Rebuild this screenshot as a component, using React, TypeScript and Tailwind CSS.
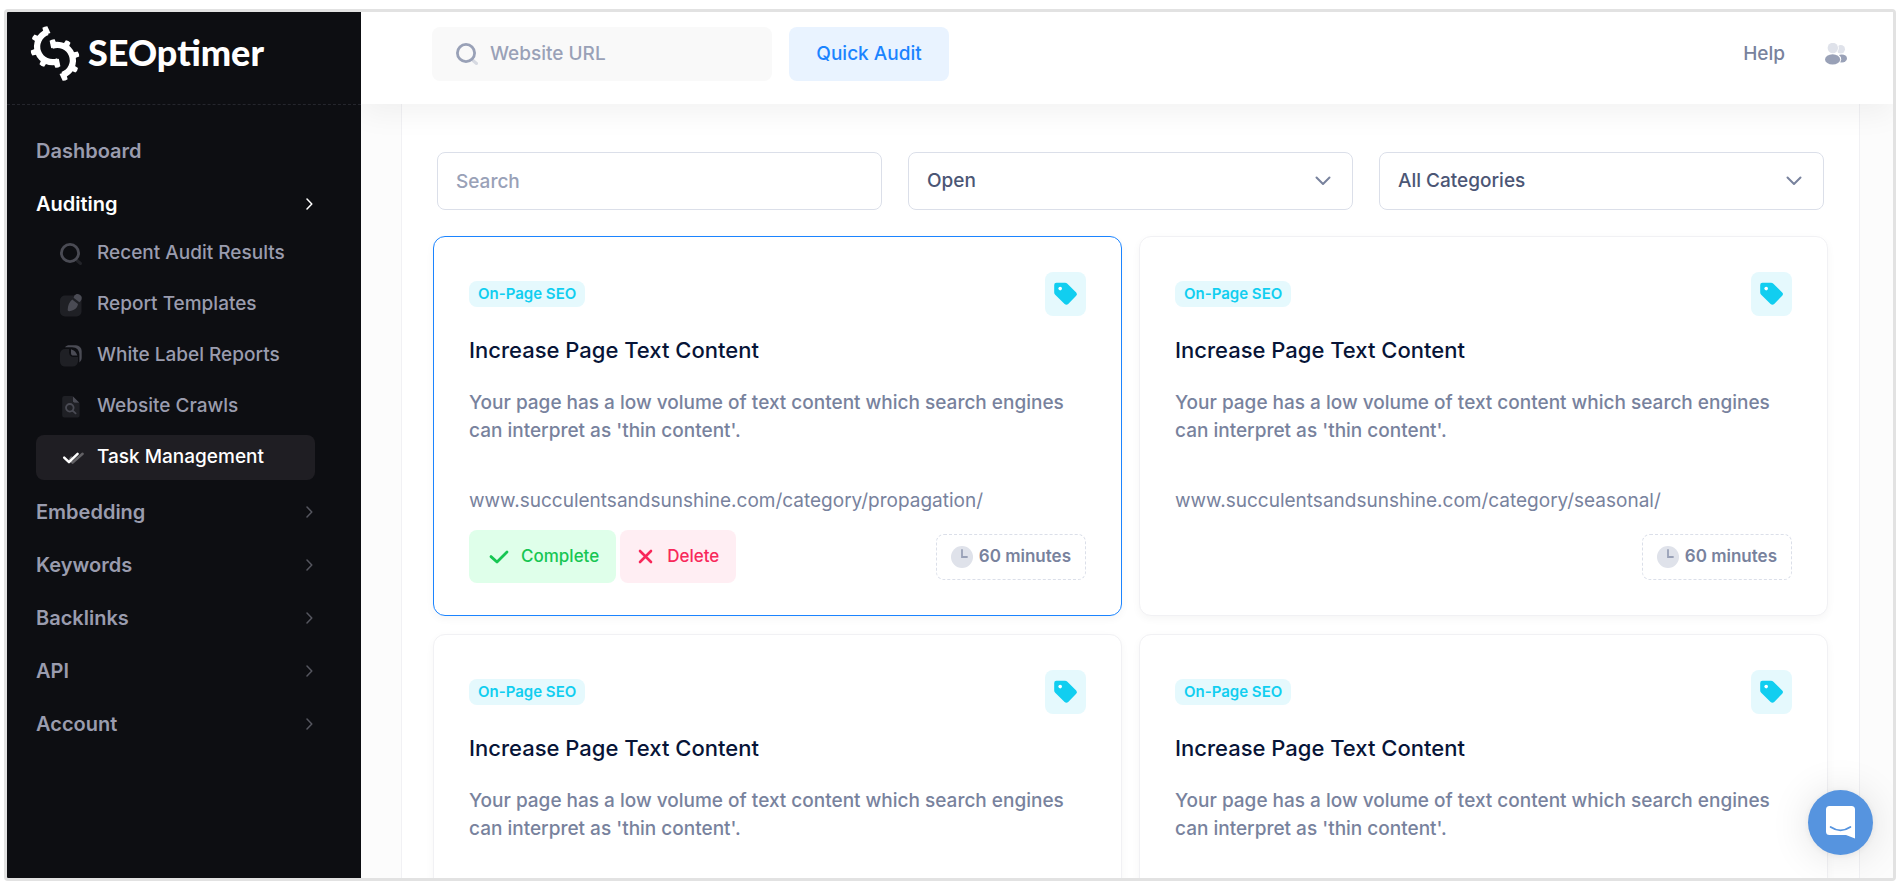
import React from 'react'

type IconProps = { className?: string }

function LogoMark() {
  const half = (
    <>
      <path d="M142 98 A47 47 0 1 0 175 186" fill="none" stroke="currentColor" strokeWidth="19" />
      {[-109, -151, -197, -242, -287].map((a) => (
        <path key={a} d="M196 133 L219 135 Q222 143 219 151 L196 153 Z" fill="currentColor" transform={`rotate(${a} 155 143)`} />
      ))}
    </>
  )
  return (
    <svg viewBox="86 80 158 166" className="h-[55px] w-[52px]" aria-hidden="true">
      {half}
      <g transform="rotate(180 165 163)">{half}</g>
    </svg>
  )
}

function SearchIcon({ className }: IconProps) {
  return (
    <svg viewBox="0 0 22 22" className={className} fill="none" stroke="currentColor" aria-hidden="true">
      <path d="M17 17.5 L20.5 20.5" strokeWidth="3" strokeLinecap="round" opacity="0.35" />
      <circle cx="10" cy="10" r="8.6" strokeWidth="2.8" />
    </svg>
  )
}

function TemplateIcon({ className }: IconProps) {
  return (
    <svg viewBox="0 0 22 22" className={className} fill="currentColor" aria-hidden="true">
      <rect x="0" y="1.5" width="21.5" height="21" rx="5" opacity="0.3" />
      <path d="M12.2 5.6 L18 10 C17.6 13.6 14.6 16.6 9.4 17.2 C8.2 17.3 7.6 16.8 7.7 15.6 C7.9 11.4 9.4 8 12.2 5.6 Z" />
      <path d="M14.4 1.6 C16 -.6 18.3 -.5 20.2 1 C22.2 2.6 22.3 4.9 20.6 7 L19.4 8.2 L13.6 3.8 Z" />
    </svg>
  )
}

function ReportIcon({ className }: IconProps) {
  return (
    <svg viewBox="0 0 22 22" className={className} fill="currentColor" aria-hidden="true">
      <path d="M5 4 H9 V7.5 A4.5 4.5 0 0 0 13.5 12 H18 V16 A5.5 5.5 0 0 1 12.5 21.6 H5 A5 5 0 0 1 0 16.6 V9 A5 5 0 0 1 5 4 Z" opacity="0.3" />
      <path d="M5 2.2 C6.2 .9 7.6 .3 9.4 .3 H16 A5.8 5.8 0 0 1 21.7 6 V12.6 C21.7 14.6 21 16.2 19.4 17.4 V9.8 C19.4 5.2 16.8 2.2 12 2.2 Z" />
      <path d="M11 4.2 C14.4 5.4 16.4 7.2 17.4 10.6 H13.6 A2.6 2.6 0 0 1 11 8 Z" />
    </svg>
  )
}

function CrawlIcon({ className }: IconProps) {
  return (
    <svg viewBox="0 0 22 22" className={className} fill="currentColor" aria-hidden="true">
      <path d="M4.5 0 H12.5 V4.5 A2.5 2.5 0 0 0 15 7 H19.6 V19.5 A2 2 0 0 1 17.6 21.6 H4.5 A2.3 2.3 0 0 1 2.2 19.3 V2.3 A2.3 2.3 0 0 1 4.5 0 Z" opacity="0.3" />
      <path d="M12.8 .2 L19.4 6.8 H14.6 A1.8 1.8 0 0 1 12.8 5 Z" />
      <circle cx="9.8" cy="11.8" r="3.8" fill="none" stroke="currentColor" strokeWidth="1.8" />
      <path d="M12.6 14.6 L15.6 17.4" fill="none" stroke="currentColor" strokeWidth="1.8" strokeLinecap="round" />
    </svg>
  )
}

function DoubleCheckIcon({ className }: IconProps) {
  return (
    <svg viewBox="0 0 22 22" className={className} fill="none" stroke="currentColor" strokeWidth="2.5" strokeLinecap="round" strokeLinejoin="round" aria-hidden="true">
      <path d="M11.5 14.6 L12.6 15.6 L22.6 6.8 M10 12.4 L11.4 10.6" opacity="0.3" />
      <path d="M4.2 10.6 L9 15.2 L17.6 6.8" />
    </svg>
  )
}

function ChevronRight({ className }: IconProps) {
  return (
    <svg viewBox="0 0 12 12" className={className} fill="none" stroke="currentColor" strokeWidth="1.5" strokeLinecap="round" strokeLinejoin="round" aria-hidden="true">
      <path d="M4 1 L8.8 6 L4 11" />
    </svg>
  )
}

function UsersIcon() {
  return (
    <svg viewBox="0 0 22 22" className="size-[22px]" aria-hidden="true">
      <circle cx="15.8" cy="6.2" r="4.2" fill="#dfe2ea" />
      <ellipse cx="16.8" cy="15.4" rx="5.2" ry="4" fill="#99a1b7" />
      <circle cx="7.8" cy="5" r="6" fill="#fff" />
      <ellipse cx="7.6" cy="16.2" rx="8.6" ry="6.2" fill="#fff" />
      <circle cx="7.8" cy="5" r="5.2" fill="#dfe2ea" />
      <ellipse cx="7.6" cy="16.4" rx="7.6" ry="5.2" fill="#99a1b7" />
    </svg>
  )
}

function TagIcon() {
  return (
    <svg viewBox="0 0 24 24" className="size-6" aria-hidden="true">
      <path d="M2.4 .8 H11 Q12.4 .8 13.4 1.8 L22.2 10.4 Q23.8 12 22.2 13.8 L14.2 22 Q12.4 23.6 10.6 22 L1.2 12.8 Q.2 11.8 .2 10.4 V3 Q.2 .8 2.4 .8 Z" fill="#11cef0" />
      <circle cx="6.2" cy="6.6" r="1.8" fill="#fff" />
    </svg>
  )
}

function ClockIcon() {
  return (
    <svg viewBox="0 0 22 22" className="size-[22px]" aria-hidden="true">
      <circle cx="11" cy="11" r="11" fill="#dfe2ea" />
      <path d="M11 4 V11 H16" fill="none" stroke="#99a1b7" strokeWidth="1.8" strokeLinecap="round" />
    </svg>
  )
}

const subItems = [
  { label: 'Recent Audit Results', icon: SearchIcon },
  { label: 'Report Templates', icon: TemplateIcon },
  { label: 'White Label Reports', icon: ReportIcon },
  { label: 'Website Crawls', icon: CrawlIcon },
  { label: 'Task Management', icon: DoubleCheckIcon, active: true },
]

const lowerItems = ['Embedding', 'Keywords', 'Backlinks', 'API', 'Account']

const tasks = [
  { id: 1, url: 'www.succulentsandsunshine.com/category/propagation/', minutes: 60, selected: true },
  { id: 2, url: 'www.succulentsandsunshine.com/category/seasonal/', minutes: 60 },
  { id: 3 },
  { id: 4 },
]

function Sidebar() {
  return (
    <aside className="w-[354px] shrink-0 bg-[#0d0e12] text-[#9a9cae]">
      <a href="#" className="flex h-[93px] items-center gap-[7px] border-b border-dashed border-[#25262d] pb-[9px] pl-[22px] text-white">
        <LogoMark />
        <span className="pb-1 font-['Lato',sans-serif] text-[36px] leading-10 font-black">SEOptimer</span>
      </a>
      <nav className="pt-[19px] pr-[46px] pl-[29px] text-xl font-semibold">
        <div className="py-1">
          <a href="#" className="flex h-[45px] items-center">Dashboard</a>
        </div>
        <div className="py-1">
          <a href="#" className="flex h-[45px] items-center justify-between text-white">
            Auditing
            <ChevronRight className="size-3" />
          </a>
        </div>
        <ul className="mt-px mb-[5px] flex flex-col gap-1.5 text-[19px] font-medium">
          {subItems.map(({ label, icon: Icon, active }) => (
            <li key={label}>
              <a
                href="#"
                className={`flex h-[45px] items-center gap-[15px] rounded-lg pl-6 ${active ? 'bg-[#1f1e23] text-white' : ''}`}
              >
                <Icon className={`size-[22px] overflow-visible ${active ? 'text-white' : 'text-[#4a4b54]'}`} />
                {label}
              </a>
            </li>
          ))}
        </ul>
        {lowerItems.map((label) => (
          <div key={label} className="py-1">
            <a href="#" className="flex h-[45px] items-center justify-between">
              {label}
              <ChevronRight className="size-3 text-[#55565f]" />
            </a>
          </div>
        ))}
      </nav>
    </aside>
  )
}

function Header() {
  return (
    <header className="relative z-10 flex h-[92px] shrink-0 items-center bg-white pr-[46px] pb-2 pl-[71px] shadow-[0_10px_30px_0_rgba(0,0,0,0.05)]">
      <label className="flex h-[54px] w-[340px] items-center gap-3 rounded-lg bg-[#f9f9f9] px-6">
        <SearchIcon className="size-[22px] shrink-0 text-[#99a1b7]" />
        <input
          type="text"
          aria-label="Website URL"
          placeholder="Website URL"
          className="w-full bg-transparent text-[19px] font-medium outline-none placeholder:text-[#99a1b7]"
        />
      </label>
      <button className="ml-[17px] h-[54px] w-40 rounded-lg bg-[#e9f3ff] text-[19px] font-medium text-[#1b84ff]">Quick Audit</button>
      <a href="#" className="ml-auto text-[19px] font-medium text-[#78829d]">Help</a>
      <button aria-label="Account menu" className="ml-10">
        <UsersIcon />
      </button>
    </header>
  )
}

function SelectBox({ label, options }: { label: string; options: string[] }) {
  return (
    <div className="grid items-center">
      <select
        aria-label={label}
        className="col-start-1 row-start-1 h-[58px] w-full appearance-none rounded-lg border border-[#dbdfe9] bg-transparent px-[18px] text-[19px] font-medium text-[#4b5675]"
      >
        {options.map((o) => (
          <option key={o}>{o}</option>
        ))}
      </select>
      <svg viewBox="0 0 16 10" className="pointer-events-none col-start-1 row-start-1 mr-[22px] h-2.5 w-4 justify-self-end" fill="none" stroke="#78829d" strokeWidth="2" strokeLinecap="round" strokeLinejoin="round" aria-hidden="true">
        <path d="M1.5 1.5 L8 8 L14.5 1.5" />
      </svg>
    </div>
  )
}

type TaskProps = { url?: string; minutes?: number; selected?: boolean }

function TaskCard({ url, minutes, selected }: TaskProps) {
  return (
    <article
      className={`min-h-[380px] rounded-xl border bg-white px-[35px] pt-[35px] pb-8 shadow-[0_3px_8px_0_rgba(0,0,0,0.04)] ${selected ? 'border-[#1b84ff]' : 'border-[#f1f1f4]'}`}
    >
      <div className="flex h-11 items-center justify-between">
        <span className="rounded-lg bg-[#e5f9fd] px-[9px] text-[15px] leading-[26px] font-semibold text-[#11cef0]">On-Page SEO</span>
        <button aria-label="Category" className="flex h-11 w-[41px] items-center justify-center rounded-lg bg-[#e5f9fd]">
          <TagIcon />
        </button>
      </div>
      <h3 className="mt-5 text-[22px] leading-7 font-medium text-[#071437]">Increase Page Text Content</h3>
      <p className="mt-[25px] text-[19px] leading-7 font-medium text-[#78829d]">
        Your page has a low volume of text content which search engines can interpret as 'thin content'.
      </p>
      {url && <a href="#" className="mt-[42px] block text-[19px] leading-7 text-[#78829d]">{url}</a>}
      {minutes && (
        <div className="mt-[15px] flex h-[53px] items-center justify-between">
          <div className="flex gap-1">
            {selected && (
              <>
                <button className="flex h-[53px] items-center gap-3 rounded-lg bg-[#dfffea] pr-[17px] pl-5 text-[17px] font-medium text-[#17c653]">
                  <svg viewBox="0 0 20 14" className="h-3.5 w-5" fill="none" stroke="currentColor" strokeWidth="2.8" strokeLinecap="round" strokeLinejoin="round" aria-hidden="true">
                    <path d="M2 6.6 L8 12 L18 2" />
                  </svg>
                  Complete
                </button>
                <button className="flex h-[53px] items-center gap-3.5 rounded-lg bg-[#ffeef3] pr-[17px] pl-[18px] text-[17px] font-medium text-[#f8285a]">
                  <svg viewBox="0 0 15 15" className="size-[15px]" fill="none" stroke="currentColor" strokeWidth="2.6" strokeLinecap="round" aria-hidden="true">
                    <path d="M2 2 L13 13 M13 2 L2 13" />
                  </svg>
                  Delete
                </button>
              </>
            )}
          </div>
          <div className="flex h-[46px] items-center gap-1.5 rounded-lg border border-dashed border-[#dbdfe9] px-3.5 text-[17px] font-semibold text-[#78829d]">
            <ClockIcon />
            {minutes} minutes
          </div>
        </div>
      )}
    </article>
  )
}

function App() {
  return (
    <div className="h-screen bg-white px-1 py-[9px] font-['Inter',sans-serif]">
      <div className="relative flex h-full overflow-hidden rounded-sm border-3 border-[#e2e2e2]">
        <Sidebar />
        <div className="flex min-w-0 flex-1 flex-col overflow-hidden bg-[#fcfcfc]">
          <Header />
          <main className="min-h-0 flex-1 overflow-hidden pr-[33px] pl-10">
            <section className="border-x border-[#f1f1f4] bg-white px-[31px] pt-12 pb-8">
              <div className="grid grid-cols-3 gap-[26px] px-1">
                <input
                  type="text"
                  aria-label="Search"
                  placeholder="Search"
                  className="h-[58px] w-full min-w-0 rounded-lg border border-[#dbdfe9] px-[18px] text-[19px] font-medium outline-none placeholder:text-[#99a1b7]"
                />
                <SelectBox label="Status" options={['Open', 'Completed', 'Deleted']} />
                <SelectBox label="Category" options={['All Categories', 'On-Page SEO']} />
              </div>
              <div className="mt-[26px] grid grid-cols-2 gap-x-[17px] gap-y-[18px]">
                {tasks.map((task) => (
                  <TaskCard key={task.id} url={task.url} minutes={task.minutes} selected={task.selected} />
                ))}
              </div>
            </section>
          </main>
        </div>
        <button
          aria-label="Open chat"
          className="absolute right-5 bottom-[23px] z-20 flex size-[65px] items-center justify-center rounded-full bg-[#5694df] shadow-[0_1px_6px_0_rgba(0,0,0,0.06),0_2px_40px_0_rgba(0,0,0,0.12)]"
        >
          <svg viewBox="0 0 29 33" className="h-[33px] w-[29px]" aria-hidden="true">
            <path d="M3.5 0 H25.5 A3.5 3.5 0 0 1 29 3.5 V32.5 L20 29 H3.5 A3.5 3.5 0 0 1 0 25.5 V3.5 A3.5 3.5 0 0 1 3.5 0 Z" fill="#fff" />
            <path d="M4.6 21 Q14.5 27.6 24.4 21" fill="none" stroke="#5694df" strokeWidth="1.8" strokeLinecap="round" />
          </svg>
        </button>
      </div>
    </div>
  )
}

export default App
